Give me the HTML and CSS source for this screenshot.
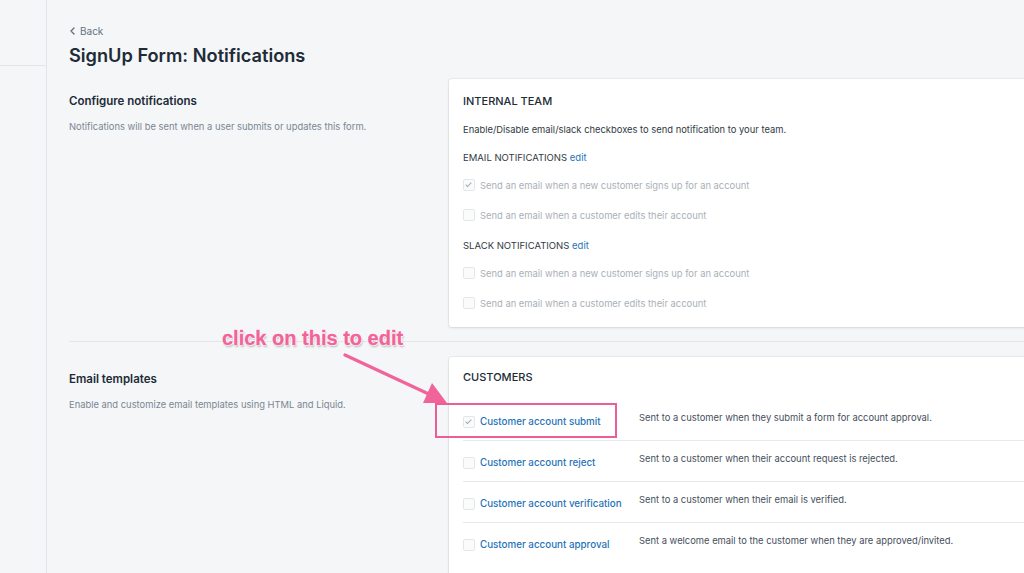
FILE: index.html
```html
<!DOCTYPE html>
<html lang="en">
<head>
    <meta charset="UTF-8">
    <meta name="viewport" content="width=device-width, initial-scale=1.0">
    <title>SignUp Form: Notifications</title>
    <link rel="stylesheet" href="styles.css">
</head>
<body>

<div class="sidebar">
    <div class="sidebar-top"></div>
</div>

<div class="main">
    <a class="back" href="#">
        <svg width="7" height="8" viewBox="0 0 7 8"><path d="M5 1 L2 4 L5 7" fill="none" stroke="#637381" stroke-width="1.4" stroke-linecap="round" stroke-linejoin="round"/></svg>
        Back
    </a>
    <h1 class="page-title">SignUp Form: Notifications</h1>

    <div class="section section-first">
        <div class="section-info">
            <h2>Configure notifications</h2>
            <p>Notifications will be sent when a user submits or updates this form.</p>
        </div>
        <div class="card card-team">
            <h3 class="card-title">INTERNAL TEAM</h3>
            <p class="card-desc">Enable/Disable email/slack checkboxes to send notification to your team.</p>

            <div class="group-label">EMAIL NOTIFICATIONS <a href="#">edit</a></div>
            <label class="check-row"><span class="checkbox checked"></span>Send an email when a new customer signs up for an account</label>
            <label class="check-row"><span class="checkbox"></span>Send an email when a customer edits their account</label>

            <div class="group-label group-slack">SLACK NOTIFICATIONS <a href="#">edit</a></div>
            <label class="check-row check-slack"><span class="checkbox"></span>Send an email when a new customer signs up for an account</label>
            <label class="check-row"><span class="checkbox"></span>Send an email when a customer edits their account</label>
        </div>
    </div>

    <div class="section section-second">
        <div class="section-info">
            <h2>Email templates</h2>
            <p>Enable and customize email templates using HTML and Liquid.</p>
        </div>
        <div class="card card-customers">
            <h3 class="card-title">CUSTOMERS</h3>
            <div class="template-row">
                <div class="template-name"><span class="checkbox checked"></span><a href="#">Customer account submit</a></div>
                <div class="template-desc">Sent to a customer when they submit a form for account approval.</div>
            </div>
            <div class="template-row">
                <div class="template-name"><span class="checkbox"></span><a href="#">Customer account reject</a></div>
                <div class="template-desc">Sent to a customer when their account request is rejected.</div>
            </div>
            <div class="template-row">
                <div class="template-name"><span class="checkbox"></span><a href="#">Customer account verification</a></div>
                <div class="template-desc">Sent to a customer when their email is verified.</div>
            </div>
            <div class="template-row">
                <div class="template-name"><span class="checkbox"></span><a href="#">Customer account approval</a></div>
                <div class="template-desc">Sent a welcome email to the customer when they are approved/invited.</div>
            </div>
        </div>
    </div>

    <!-- annotation drawn over the screenshot -->
    <div class="note-text">click on this to edit</div>
    <svg class="note-arrow" width="120" height="60" viewBox="0 0 120 60">
        <line x1="2" y1="3" x2="90" y2="44" stroke="#f0649a" stroke-width="3.2" stroke-linecap="round"/>
        <polygon points="104,51 80,51 89,31" fill="#f0649a"/>
    </svg>
    <div class="note-box"></div>
</div>

</body>
</html>
```

FILE: styles.css
```css
body {
    display: flex;
    margin: 0;
    height: 100vh;
    overflow: hidden;
    font-family: Inter, "Noto Sans", sans-serif;
    background-color: #f4f6f8;
    color: #212b36;
}

.sidebar {
    width: 46px;
    flex-shrink: 0;
    border-right: 1px solid #e3e6e9;
}

.sidebar-top {
    height: 65px;
    border-bottom: 1px solid #e3e6e9;
}

.main {
    position: relative;
    flex: 1;
    min-width: 0;
    padding-left: 22px;
}

.back {
    display: flex;
    align-items: center;
    gap: 4px;
    margin-top: 24px;
    line-height: 14px;
    font-size: 10px;
    color: #637381;
    text-decoration: none;
}

.page-title {
    margin: 5px 0 0;
    font-size: 18.2px;
    line-height: 24px;
    font-weight: 600;
}

.section {
    display: grid;
    grid-template-columns: 380px 620px;
}

.section-first {
    margin-top: 12px;
    padding-bottom: 14px;
    border-bottom: 1px solid #e3e6e9;
}

.section-second {
    padding-top: 15px;
}

.section-info h2 {
    margin: 14px 0 0;
    font-size: 11.5px;
    line-height: 16px;
    font-weight: 600;
}

.section-info p {
    margin: 11px 0 0;
    font-size: 9.4px;
    line-height: 14px;
    color: #7b8691;
}

.card {
    background: #fff;
    border-radius: 3px;
    box-shadow: 0 0 0 1px rgba(63, 63, 68, 0.05), 0 1px 3px rgba(63, 63, 68, 0.12);
    padding: 0 0 0 14px;
}

.card-team {
    padding-bottom: 9px;
}

.card-customers {
    height: 240px;
}

.card-title {
    margin: 0;
    padding-top: 14px;
    font-size: 11px;
    line-height: 16px;
    font-weight: 500;
}

.card-customers .card-title {
    padding-top: 12px;
}

.card-desc {
    margin: 14px 0 0;
    font-size: 9.4px;
    line-height: 14px;
    color: #303a44;
}

.group-label {
    margin-top: 14px;
    font-size: 9.5px;
    line-height: 14px;
    color: #303a44;
}

.group-label a,
.template-name a {
    color: #1f73b7;
    text-decoration: none;
}

.group-slack {
    margin-top: 9px;
}

.check-row {
    display: flex;
    align-items: center;
    gap: 5px;
    height: 30px;
    font-size: 9.4px;
    color: #a9b0b7;
}

.group-label + .check-row {
    margin-top: 5px;
}

.check-slack {
    margin-top: 5px !important;
}

.checkbox {
    position: relative;
    width: 10px;
    height: 10px;
    flex-shrink: 0;
    border: 1px solid #e4e7ea;
    border-radius: 2px;
    background: #fafbfb;
}

.checkbox.checked::after {
    content: "";
    position: absolute;
    left: 3px;
    top: 1px;
    width: 2px;
    height: 5px;
    border: solid #a3abb3;
    border-width: 0 1px 1px 0;
    transform: rotate(45deg);
}

.template-row {
    display: flex;
    align-items: flex-start;
    height: 29px;
    padding-top: 11px;
    border-bottom: 1px solid #e6e9ec;
}

.card-customers .card-title + .template-row {
    margin-top: 15px;
}

.template-row:last-child {
    border-bottom: none;
}

.template-name {
    display: flex;
    align-items: center;
    gap: 5px;
    width: 176px;
    flex-shrink: 0;
    margin-top: 4px;
    font-size: 9.8px;
    line-height: 14px;
    font-weight: 500;
}

.template-desc {
    font-size: 9.4px;
    line-height: 14px;
    color: #454f5b;
}

.note-text {
    position: absolute;
    left: 175px;
    top: 326px;
    font-family: "Liberation Sans", Arial, sans-serif;
    font-size: 20px;
    line-height: 24px;
    font-weight: 700;
    color: #f0649a;
    -webkit-text-stroke: 0.3px #f0649a;
    text-shadow: 1px 0 0 #fff, -1px 0 0 #fff, 0 1px 0 #fff, 0 -1px 0 #fff, 1px 2px 2px rgba(0, 0, 0, 0.25);
}

.note-arrow {
    position: absolute;
    left: 296px;
    top: 352px;
}

.note-box {
    position: absolute;
    left: 388px;
    top: 403px;
    width: 178px;
    height: 31px;
    border: 2.5px solid #eb5e96;
}
```
